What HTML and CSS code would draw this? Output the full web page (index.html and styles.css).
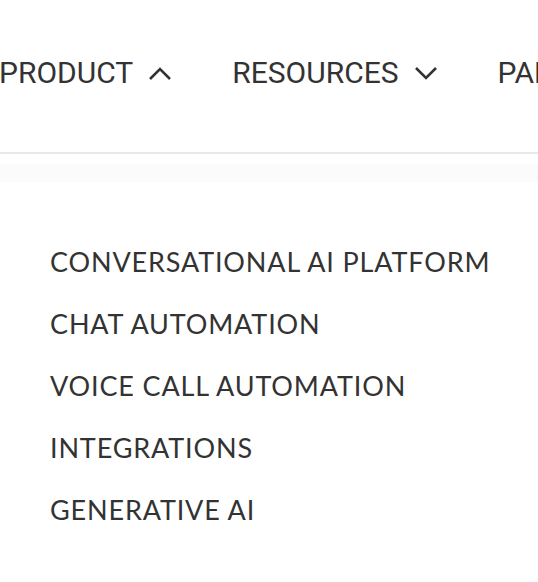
FILE: index.html
```html
<!DOCTYPE html>
<html lang="en">
<head>
    <meta charset="UTF-8">
    <meta name="viewport" content="width=device-width, initial-scale=1.0">
    <title>Product Menu</title>
    <link rel="stylesheet" href="styles.css">
</head>
<body>
    <header class="site-header">
        <nav class="main-nav">
            <a class="nav-item is-open" href="#">PRODUCT
                <svg class="chevron" viewBox="0 0 24 16" width="24" height="16"><path d="M2 14 L12 4 L22 14" /></svg>
            </a>
            <a class="nav-item" href="#">RESOURCES
                <svg class="chevron" viewBox="0 0 24 16" width="24" height="16"><path d="M2 3 L12 13 L22 3" /></svg>
            </a>
            <a class="nav-item" href="#">PARTNERS</a>
        </nav>
    </header>

    <div class="dropdown">
        <ul class="dropdown-list">
            <li><a href="#">CONVERSATIONAL AI PLATFORM</a></li>
            <li><a href="#">CHAT AUTOMATION</a></li>
            <li><a href="#">VOICE CALL AUTOMATION</a></li>
            <li><a href="#">INTEGRATIONS</a></li>
            <li><a href="#">GENERATIVE AI</a></li>
        </ul>
    </div>
</body>
</html>
```

FILE: styles.css
```css
:root {
    --text-dark: #333333;
    --border-light: #e8e8e8;
    --white: #ffffff;
}

* {
    box-sizing: border-box;
    margin: 0;
    padding: 0;
}

body {
    background: var(--white);
    color: var(--text-dark);
    overflow: hidden;
}

a {
    color: inherit;
    text-decoration: none;
}

/* Top navigation bar */
.site-header {
    height: 154px;
    border-bottom: 2px solid var(--border-light);
    overflow: hidden;
}

.main-nav {
    display: flex;
    align-items: center;
    gap: 60px;
    height: 145px;
    margin-left: -1px;
    white-space: nowrap;
}

.nav-item {
    display: flex;
    align-items: center;
    gap: 15px;
    font-family: Roboto, "Liberation Sans", sans-serif;
    font-size: 30px;
    font-weight: 400;
}

.chevron {
    fill: none;
    stroke: var(--text-dark);
    stroke-width: 2.6;
}

/* Product dropdown panel */
.dropdown {
    margin-top: 10px;
    padding-top: 18px;
    background: linear-gradient(#fbfbfb, #fafafa 80%, var(--white));
}

.dropdown-list {
    list-style: none;
    background: var(--white);
    padding: 60px 50px 40px;
    display: flex;
    flex-direction: column;
    gap: 22px;
}

.dropdown-list a {
    display: block;
    white-space: nowrap;
    font-family: Lato, "Open Sans", sans-serif;
    font-size: 27px;
    letter-spacing: 0.85px;
    line-height: 40px;
}
```
